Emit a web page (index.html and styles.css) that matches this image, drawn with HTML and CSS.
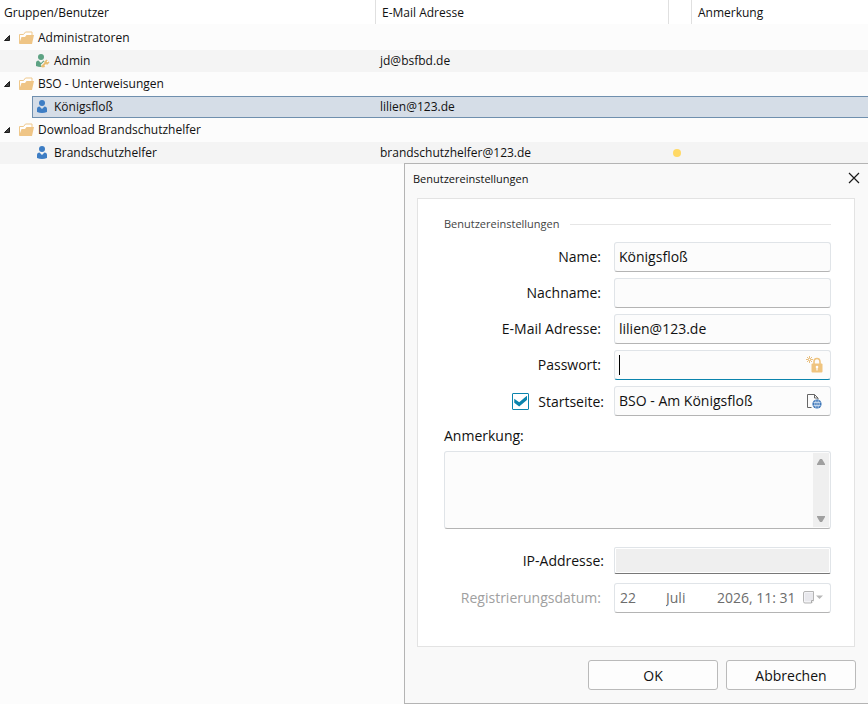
FILE: index.html
```html
<!DOCTYPE html>
<html lang="de">
<head>
<meta charset="utf-8">
<title>Benutzereinstellungen</title>
<link rel="stylesheet" href="styles.css">
</head>
<body>
<svg class="defs" aria-hidden="true">
  <symbol id="arrow" viewBox="0 0 8 8"><path d="M6.500 1.500v5h-5z" fill="#404040" stroke="#1c1c1c"/></symbol>
  <symbol id="folder" viewBox="0 0 16 16">
    <path d="M1.500 13V4.500h4l2-2.500h6.500v3" fill="#fff" stroke="#efc88c"/>
    <path d="M1 14 3.500 7H7l1.500-2H16l-2 9z" fill="#efc586"/>
  </symbol>
  <symbol id="user" viewBox="0 0 12 14">
    <circle cx="6" cy="3" r="3" fill="#3d7dc4"/>
    <path d="M1 12V9q0-2.500 2.500-2.500L6 9l2.500-2.500Q11 6.500 11 9v3q-5 2-10 0z" fill="#3d7dc4"/>
  </symbol>
  <symbol id="admin" viewBox="0 0 14 14">
    <circle cx="5" cy="3" r="3" fill="#5da283"/>
    <path d="M0 12V9q0-2.500 2.500-2.500L5 9l2.500-2.500 1.500 1-1 5q-4 1-8-.5z" fill="#5da283"/>
    <path d="m6 12.500 4-4" stroke="#fff" stroke-width="4"/>
    <path d="m5.500 13 5-5M7 11.500l1.500 1.500" stroke="#e8bd72" stroke-width="2"/>
    <path d="m10.500 5.500 3 3-2.500 2.500-3-3z" fill="#e8bd72"/>
    <circle cx="11.500" cy="7.500" r=".8" fill="#fff"/>
  </symbol>
</svg>

<table class="users">
  <colgroup><col class="col-name"><col class="col-mail"><col class="col-flag"><col></colgroup>
  <thead>
    <tr><th>Gruppen/Benutzer</th><th>E-Mail Adresse</th><th></th><th>Anmerkung</th></tr>
  </thead>
  <tbody>
    <tr><td colspan="4"><div class="group"><svg class="arrow"><use href="#arrow"/></svg><svg class="folder"><use href="#folder"/></svg>Administratoren</div></td></tr>
    <tr class="user"><td><div class="person"><svg class="admin"><use href="#admin"/></svg>Admin</div></td><td>jd@bsfbd.de</td><td></td><td></td></tr>
    <tr><td colspan="4"><div class="group"><svg class="arrow"><use href="#arrow"/></svg><svg class="folder"><use href="#folder"/></svg>BSO - Unterweisungen</div></td></tr>
    <tr class="user selected"><td><div class="person"><svg><use href="#user"/></svg>Königsfloß</div></td><td>lilien@123.de</td><td></td><td></td></tr>
    <tr><td colspan="4"><div class="group"><svg class="arrow"><use href="#arrow"/></svg><svg class="folder"><use href="#folder"/></svg>Download Brandschutzhelfer</div></td></tr>
    <tr class="user"><td><div class="person"><svg><use href="#user"/></svg>Brandschutzhelfer</div></td><td>brandschutzhelfer@123.de</td><td class="flag"><span class="dot"></span></td><td></td></tr>
  </tbody>
</table>

<form class="dialog" role="dialog" aria-labelledby="title">
  <header class="titlebar">
    <span id="title">Benutzereinstellungen</span>
    <button type="button" class="close" aria-label="Schließen"><svg viewBox="0 0 12 12"><path d="m1 1 10 10M11 1 1 11" stroke="#1a1a1a" stroke-width="1.200"/></svg></button>
  </header>

  <div class="panel">
    <h2 class="section">Benutzereinstellungen</h2>

    <div class="fields">
      <label for="name">Name:</label>
      <input class="box" id="name" type="text" value="Königsfloß">

      <label for="surname">Nachname:</label>
      <input class="box" id="surname" type="text">

      <label for="mail">E-Mail Adresse:</label>
      <input class="box" id="mail" type="text" value="lilien@123.de">

      <label for="password">Passwort:</label>
      <div class="box active">
        <span class="caret"></span>
        <input id="password" type="password">
        <button type="button" aria-label="Passwort erzeugen">
          <svg viewBox="0 0 18 18"><path d="M3.500 0v7M0 3.500h7M1 1l5 5M6 1 1 6" stroke="#e9c080"/><circle cx="3.500" cy="3.500" r="1.200" fill="#fff" stroke="#e9c080"/><path d="M8 8V6q0-3.500 3-3.500t3 3.500v2" fill="none" stroke="#efc47f" stroke-width="1.600"/><rect x="5.500" y="7.500" width="11" height="9" rx="1" fill="#efc47f"/><circle cx="11" cy="11" r="1.300" fill="#fff"/><path d="M11 11v3.500" stroke="#fff" stroke-width="1.200"/></svg>
        </button>
      </div>

      <label class="wide" for="start"><input class="check" type="checkbox" checked aria-label="Startseite verwenden">Startseite:</label>
      <div class="box">
        <input id="start" type="text" value="BSO - Am Königsfloß">
        <button type="button" aria-label="Startseite wählen">
          <svg viewBox="0 0 18 18"><path d="M5.500 15.500h-4v-13h7l3.500 3.500v1.500M8.500 2.500V6H12" fill="none" stroke="#666"/><circle cx="11" cy="12" r="4.600" fill="#3d76b8"/><path d="M7.500 10.500h7M7.500 13.500h7M11 8.500v7M9.500 8.500q-1.500 3.500 0 7M12.500 8.500q1.500 3.500 0 7" stroke="#d4e2f2" stroke-width=".8" fill="none"/></svg>
        </button>
      </div>
    </div>

    <label class="note-label" for="note">Anmerkung:</label>
    <div class="note">
      <textarea id="note"></textarea>
      <div class="scroll" aria-hidden="true">
        <svg viewBox="0 0 8 6"><path d="M3 0h2l3 5v1H0V5z" fill="#a0a0a0"/></svg>
        <svg viewBox="0 0 8 6"><path d="M3 6h2l3-5V0H0v1z" fill="#a0a0a0"/></svg>
      </div>
    </div>

    <div class="fields meta">
      <label class="wide" for="ip">IP-Addresse:</label>
      <input class="box readonly" id="ip" type="text" readonly>

      <label class="muted" for="day">Registrierungsdatum:</label>
      <div class="box date">
        <input class="day" id="day" type="text" value="22" disabled>
        <input class="month" type="text" value="Juli" aria-label="Monat" disabled>
        <input class="time" type="text" value="2026, 11: 31" aria-label="Jahr und Uhrzeit" disabled>
        <button type="button" aria-label="Kalender" disabled>
          <svg viewBox="0 0 20 14"><path d="M.5 2q0-1.500 1.500-1.500h8.500v9l-2 2.500H2Q.5 12 .5 10.500z" fill="#f3f3f6" stroke="#b5b5b5"/><path d="M3 2.500v7M5 2.500v7M7 2.500v7M9 2.500v7" stroke="#c6c6d0" stroke-dasharray="1 1"/><path d="M8.500 12V9.500h2" fill="#fff" stroke="#aaa"/><path d="M13 4.500h7L16.500 8z" fill="#b8b8b8"/></svg>
        </button>
      </div>
    </div>
  </div>

  <footer class="actions">
    <button type="submit">OK</button>
    <button type="button">Abbrechen</button>
  </footer>
</form>
</body>
</html>
```
FILE: styles.css
```css
* { box-sizing: border-box; }

body {
  margin: 0;
  min-height: 100vh;
  background: #fcfcfc;
  color: #111;
  font-family: "Open Sans", "Noto Sans", sans-serif;
  font-size: 12px;
}

button, input, textarea { font: inherit; color: inherit; }
input, textarea { min-width: 0; outline: 0; }
svg { display: block; flex: none; }
.defs { position: absolute; width: 0; height: 0; }

/* User list */
.users { width: 100%; margin-top: -1px; table-layout: fixed; border-collapse: separate; border-spacing: 0 1px; }
.col-name { width: 376px; }
.col-mail { width: 293px; }
.col-flag { width: 23px; }
.users th {
  height: 24px;
  padding: 0 6px;
  background: #fff;
  border-right: 1px solid #e0e0e0;
  font-weight: 400;
  text-align: left;
}
.users th:first-child { padding-left: 4px; }
.users th:last-child { border-right: 0; }
.users tbody::before { content: ""; display: block; height: 1px; }
.users td { height: 22px; padding: 0 4px; line-height: 20px; }
.users td:first-child { padding: 0; }
.user td { background: #f4f4f4; }
.group, .person { display: flex; align-items: center; height: 22px; }
.group { padding-left: 3px; }
.person { margin-left: 32px; padding-left: 4px; gap: 6px; }
.person svg { width: 12px; height: 14px; }
.person .admin { width: 14px; margin-right: -2px; }
.arrow { width: 8px; height: 8px; margin-right: 7px; }
.folder { width: 16px; height: 16px; margin-right: 4px; }
.selected td:first-child { background: none; }
.selected .person {
  padding-left: 3px;
  background: #d5dde7;
  border: 1px solid #6f8fae;
  border-right: 0;
}
.selected td:not(:first-child) {
  background: #d5dde7;
  border: solid #6f8fae;
  border-width: 1px 0;
}
.users .flag { padding-right: 11px; }
.dot { display: block; width: 8px; height: 8px; border-radius: 50%; background: #ffd966; }

/* Dialog */
.dialog {
  position: absolute;
  top: 163px;
  left: 404px;
  right: 0;
  border: 1px solid #b4b4b4;
  border-right: 0;
  background: #f9f9f9;
  padding: 0 12px 13px;
}
.titlebar {
  display: flex;
  align-items: center;
  justify-content: space-between;
  height: 34px;
  margin: 0 -8px 0 -4px;
  padding-bottom: 6px;
  font-size: 11px;
}
.close { width: 20px; height: 20px; padding: 4px; border: 0; background: none; }
.panel {
  margin-right: 1px;
  padding: 16px 23px 33px 26px;
  border: 1px solid #e3e3e3;
  background: #fff;
}
.section {
  display: flex;
  align-items: center;
  gap: 10px;
  margin: 0 0 9px;
  color: #444;
  font-size: 11px;
  font-weight: 400;
  line-height: 18px;
}
.section::after { content: ""; flex: 1; height: 1px; background: #e6e6e6; }

.fields, .note-label, .box, .actions { font-size: 14px; }
.fields { display: grid; grid-template-columns: 160px minmax(0, 1fr); gap: 6px 10px; }
.meta { row-gap: 9px; }
.fields label { display: flex; align-items: center; justify-content: flex-end; padding: 0 3px 2px 0; }
.fields .wide { padding: 0; }
.fields .muted { color: #a0a0a0; }

.box {
  display: flex;
  align-items: center;
  width: 100%;
  height: 30px;
  padding: 0 6px 0 4px;
  border: 1px solid #e0e4e8;
  border-bottom-color: #b4b4b4;
  border-radius: 3px;
  background: #fcfcfc;
}
input.box, .box input { padding-bottom: 2px; }
.box input { flex: 1; padding: 0 0 2px; border: 0; background: none; }
.box button { padding: 0; border: 0; background: none; }
.box svg { width: 18px; height: 18px; }
.active { border-bottom-color: #0a84ad; }
.active input { caret-color: transparent; }
.caret { width: 1px; height: 20px; background: #000; }
.readonly { height: 27px; background: #efefef; border-bottom-color: #777; border-radius: 2px; box-shadow: inset 0 0 0 1px #fff; }

.check {
  appearance: none;
  position: relative;
  width: 17px;
  height: 17px;
  margin: 0 9px 0 0;
  border: 1px solid #0a84ad;
  border-radius: 1px;
  background: #fff;
}
.check:checked::after {
  content: "";
  position: absolute;
  inset: 2px 1px;
  background: #0a84ad;
  clip-path: polygon(0 30%, 38% 62%, 100% 0, 100% 38%, 38% 100%, 0 66%);
}

.note-label { display: block; margin: 10px 0 5px; line-height: 20px; }
.note {
  display: flex;
  height: 78px;
  margin-bottom: 18px;
  border: 1px solid #e0e4e8;
  border-bottom-color: #b4b4b4;
  border-radius: 3px;
  background: #fcfcfc;
}
.note textarea { flex: 1; border: 0; background: none; resize: none; }
.scroll { display: flex; flex-direction: column; justify-content: space-between; align-items: center; width: 16px; margin: 1px; padding: 6px 0 5px; background: #efefef; }
.scroll svg { width: 8px; height: 6px; }

.date { padding: 0 7px 0 5px; background: #fff; color: #6d6d6d; }
.date .day { flex: 0 0 46px; }
.date .month { flex: 1; }
.date .time { flex: 0 0 86px; }
.date svg { width: 20px; height: 14px; }

.actions { display: flex; justify-content: flex-end; gap: 8px; margin-top: 13px; }
.actions button {
  width: 130px;
  height: 30px;
  padding: 0;
  border: 1px solid #bababa;
  border-radius: 3px;
  background: #fdfdfd;
}
```
